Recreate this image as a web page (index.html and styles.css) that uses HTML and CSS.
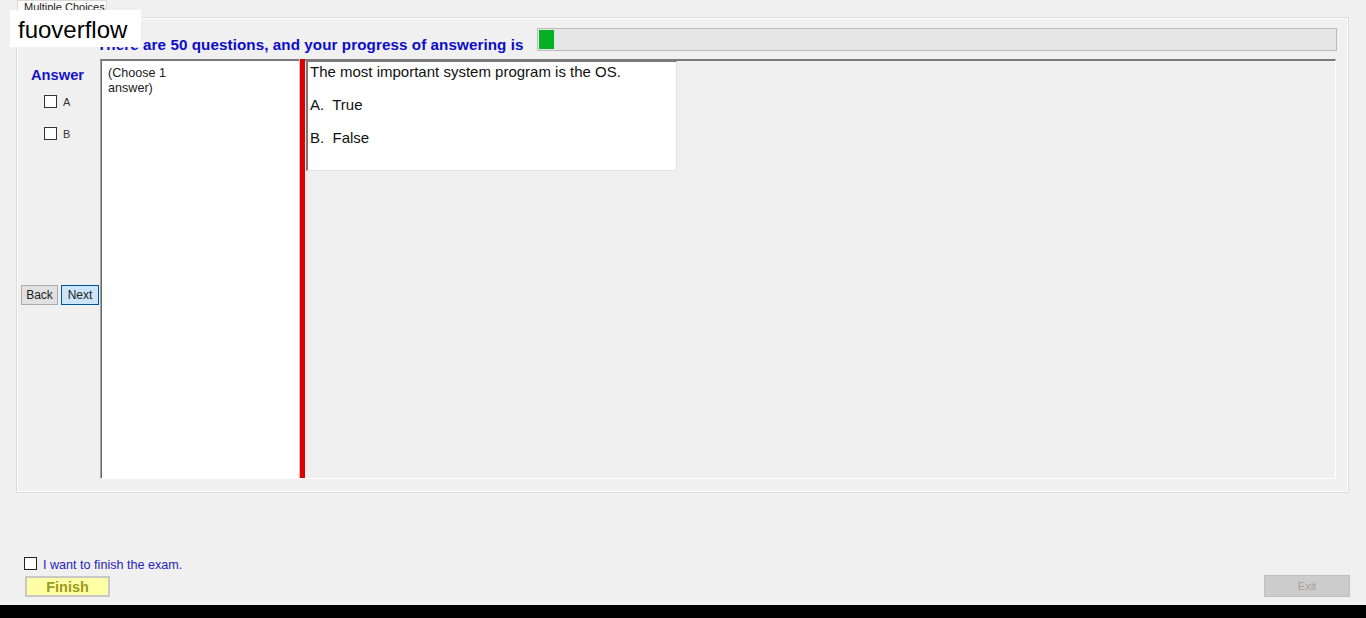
FILE: index.html
```html
<!DOCTYPE html>
<html>
<head>
<meta charset="utf-8">
<title>Multiple Choices</title>
<link rel="stylesheet" href="styles.css">
</head>
<body>
<div class="watermark">fuoverflow</div>
<div class="tabs">
  <div class="tab-strip"><div class="tab">Multiple Choices</div></div>
  <div class="tabpage">
    <div class="title-row">
      <span class="title">There are 50 questions, and your progress of answering is</span>
      <div class="progress"><div class="progress-fill" style="width:15px"></div></div>
    </div>
    <div class="body-row">
      <div class="left-col">
        <div class="answer-label">Answer</div>
        <label class="opt"><span class="box"></span><span>A</span></label>
        <label class="opt"><span class="box"></span><span>B</span></label>
        <div class="nav">
          <button class="btn">Back</button>
          <button class="btn btn-next">Next</button>
        </div>
      </div>
      <div class="frame">
        <div class="choose-panel">(Choose 1<br>answer)</div>
        <div class="splitter"></div>
        <div class="question-area">
          <div class="question-box">
            <p class="q">The most important system program is the OS.</p>
            <p class="a">A.&nbsp; True</p>
            <p class="a">B.&nbsp; False</p>
          </div>
        </div>
      </div>
    </div>
  </div>
</div>
<div class="footer">
  <div class="finish-left">
    <label class="finish-check"><span class="box"></span><span>I want to finish the exam.</span></label>
    <button class="finish-btn">Finish</button>
  </div>
  <button class="exit-btn">Exit</button>
</div>
<div class="blackbar"></div>
</body>
</html>
```
FILE: styles.css
```css
* { box-sizing: border-box; }
html, body { margin: 0; padding: 0; }
body {
  width: 1366px;
  height: 618px;
  background: #f0f0f0;
  font-family: "Liberation Sans", Arial, sans-serif;
  display: flex;
  flex-direction: column;
  position: relative;
  overflow: hidden;
}
.watermark {
  position: absolute;
  left: 10px;
  top: 10px;
  width: 131px;
  height: 37px;
  background: #ffffff;
  color: #000;
  font-size: 24px;
  line-height: 40px;
  padding-left: 8px;
  z-index: 5;
}
.tabs { padding-left: 16px; }
.tab-strip { height: 17px; padding-left: 1px; }
.tab {
  width: 90px;
  height: 17px;
  background: #fbfbfb;
  border: 1px solid #d9d9d9;
  border-bottom: none;
  font-size: 11px;
  color: #222;
  padding: 0 0 0 6px;
  line-height: 13px;
  white-space: nowrap;
  overflow: hidden;
}
.tabpage {
  width: 1333px;
  height: 476px;
  border: 1px solid #dcdcdc;
  box-shadow: inset 1px 1px 0 #ffffff, inset -1px -1px 0 #ffffff;
  display: flex;
  flex-direction: column;
}
.title-row {
  height: 41px;
  display: flex;
  align-items: center;
  padding-left: 80px;
  padding-top: 2px;
}
.title {
  font-weight: bold;
  font-size: 15.2px;
  letter-spacing: 0.08px;
  color: #0c0cc8;
  white-space: nowrap;
  width: 440px;
  padding-top: 9px;
}
.progress {
  width: 800px;
  height: 23px;
  border: 1px solid #bcbcbc;
  background: #e6e6e6;
  padding: 1px;
}
.progress-fill { height: 100%; background: #06b025; }
.body-row {
  display: flex;
  height: 420px;
}
.left-col {
  width: 83px;
  padding: 8px 0 0 4px;
  display: flex;
  flex-direction: column;
}
.answer-label {
  font-weight: bold;
  font-size: 14.7px;
  color: #1414c8;
  padding-left: 10px;
  height: 16px;
  line-height: 17px;
  margin-bottom: 12px;
}
.opt {
  display: flex;
  align-items: center;
  gap: 6px;
  padding-left: 23px;
  height: 13px;
  margin-bottom: 19px;
  font-size: 11px;
  color: #333;
}
.box {
  display: inline-block;
  width: 13px;
  height: 13px;
  border: 1px solid #333;
  background: #fff;
  flex: none;
}
.nav {
  margin-top: 126px;
  display: flex;
  gap: 3px;
}
.btn {
  font-family: "Liberation Sans", Arial, sans-serif;
  font-size: 12px;
  color: #222;
  height: 20px;
  width: 37px;
  padding: 0;
  background: #e1e1e1;
  border: 1px solid #adadad;
}
.btn-next {
  width: 38px;
  background: #cce4f7;
  border-color: #005499;
}
.frame {
  width: 1236px;
  height: 420px;
  display: flex;
  border-top: 2px solid #7a7a7a;
  border-left: 1px solid #a0a0a0;
  border-right: 1px solid #ffffff;
  border-bottom: 1px solid #ffffff;
}
.choose-panel {
  width: 198px;
  background: #ffffff;
  border-left: 1px solid #696969;
  font-size: 12.6px;
  line-height: 15px;
  color: #222;
  padding: 5px 0 0 6px;
}
.splitter {
  width: 6px;
  background: #dd0000;
  border-left: 1px solid #f6b0b0;
  margin-top: -2px;
}
.question-area {
  flex: 1;
  padding: 0 0 0 1px;
}
.question-box {
  width: 371px;
  height: 110px;
  background: #ffffff;
  border-left: 2px solid #7a7a7a;
  border-top: 1px solid #7a7a7a;
  border-right: 1px solid #e3e3e3;
  border-bottom: 1px solid #e3e3e3;
  padding: 2px 0 0 2px;
  font-size: 15px;
  color: #111;
}
.question-box p { margin: 0; line-height: 16px; }
.question-box .a { margin-top: 17px; }
.footer {
  margin-top: auto;
  display: flex;
  justify-content: space-between;
  align-items: flex-end;
  padding: 0 16px 8px 24px;
}
.finish-left { display: flex; flex-direction: column; }
.finish-check {
  display: flex;
  align-items: center;
  gap: 6px;
  font-size: 12.6px;
  color: #2424b8;
  height: 14px;
  margin-bottom: 6px;
}
.finish-check span:last-child { padding-top: 3px; }
.finish-check .box { border-color: #222; }
.finish-btn {
  margin-left: 1px;
  width: 85px;
  height: 21px;
  background: #ffffa6;
  border: 2px solid #c8c8c8;
  font-family: "Liberation Sans", Arial, sans-serif;
  font-weight: bold;
  font-size: 14.5px;
  color: #9a9a1c;
  padding: 0;
}
.exit-btn {
  width: 86px;
  height: 22px;
  background: #cccccc;
  border: 1px solid #bfbfbf;
  font-family: "Liberation Sans", Arial, sans-serif;
  font-size: 11px;
  color: #a3a3a3;
  padding: 0;
}
.blackbar {
  height: 13px;
  background: #000;
  flex: none;
}
```
